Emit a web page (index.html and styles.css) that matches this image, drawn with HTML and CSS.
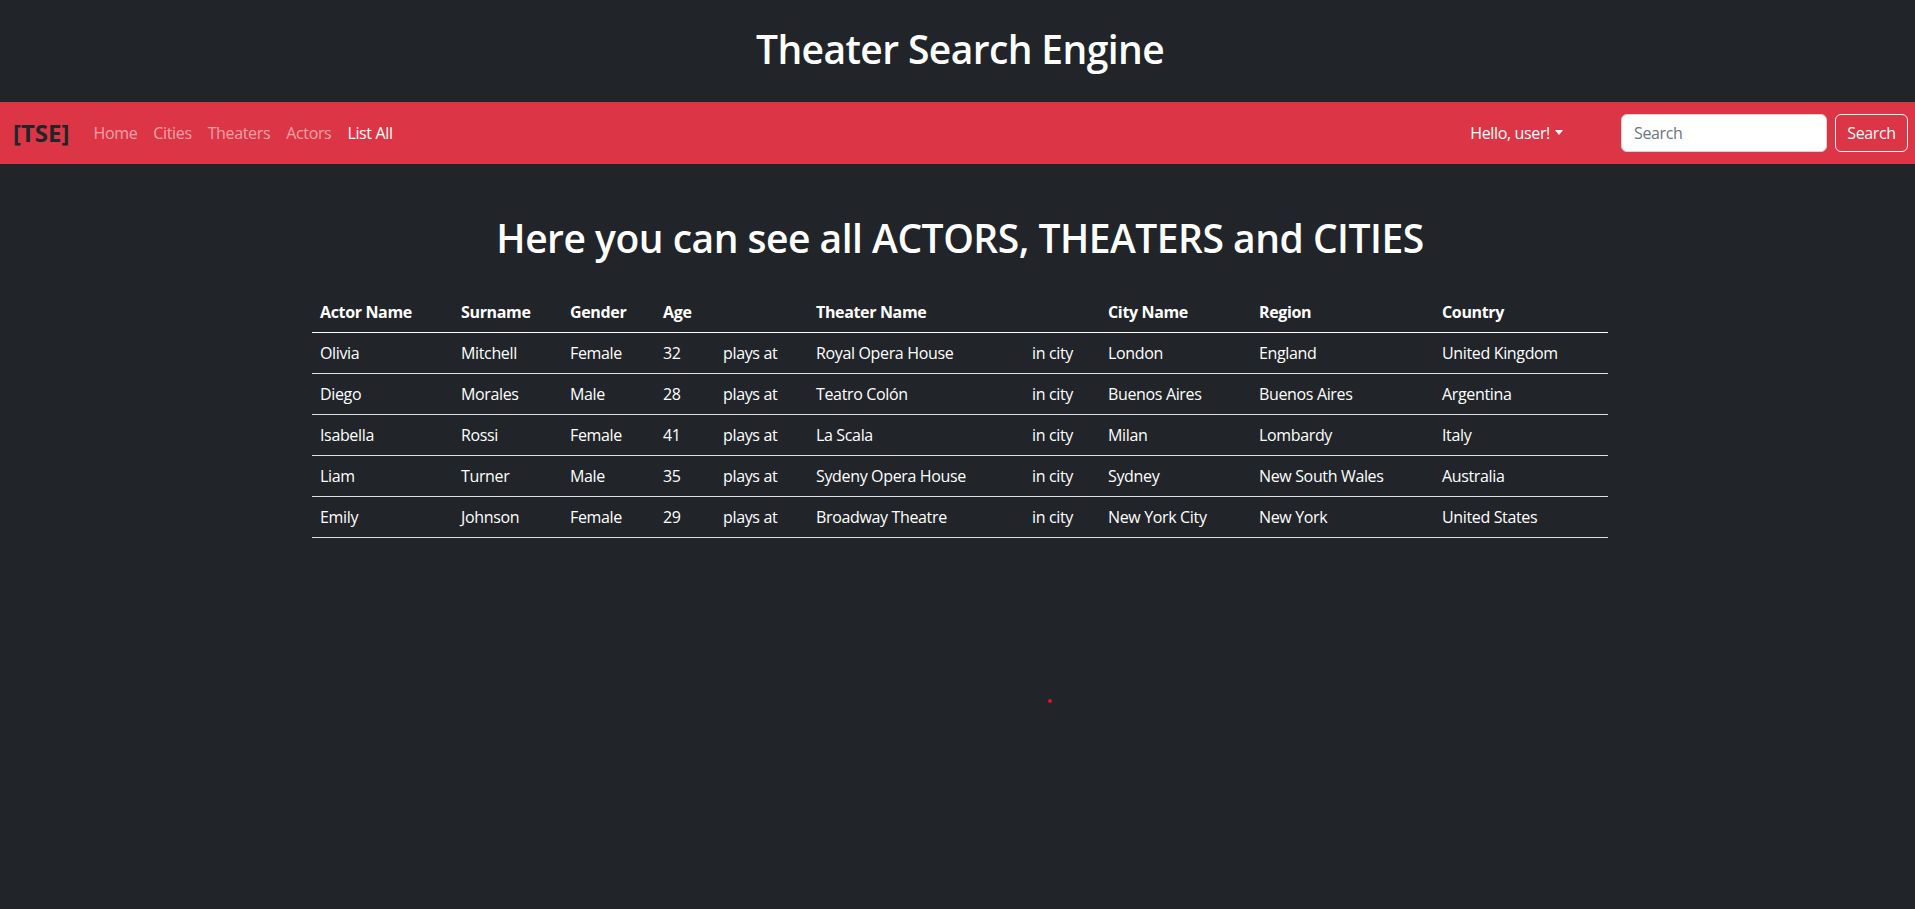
FILE: index.html
```html
<!DOCTYPE html>
<html lang="en">
<head>
<meta charset="utf-8">
<title>Theater Search Engine</title>
<link rel="stylesheet" href="styles.css">
</head>
<body>
<div class="page">
  <header class="site-header">
    <h1 class="site-title">Theater Search Engine</h1>
  </header>
  <nav class="navbar">
    <a class="brand" href="#">[TSE]</a>
    <ul class="nav-links">
      <li><a class="nav-link" href="#">Home</a></li>
      <li><a class="nav-link" href="#">Cities</a></li>
      <li><a class="nav-link" href="#">Theaters</a></li>
      <li><a class="nav-link" href="#">Actors</a></li>
      <li><a class="nav-link active" href="#">List All</a></li>
    </ul>
    <div class="nav-right">
      <a class="nav-link dropdown-toggle" href="#">Hello, user!</a>
      <form class="search-form">
        <input class="search-input" type="search" placeholder="Search">
        <button class="search-btn" type="button">Search</button>
      </form>
    </div>
  </nav>
  <main class="content">
    <h1 class="page-title">Here you can see all ACTORS, THEATERS and CITIES</h1>
    <table class="data-table">
      <colgroup>
        <col class="c-actor"><col class="c-surname"><col class="c-gender"><col class="c-age"><col class="c-plays">
        <col class="c-theater"><col class="c-incity"><col class="c-city"><col class="c-region"><col class="c-country">
      </colgroup>
      <thead>
        <tr><th>Actor Name</th><th>Surname</th><th>Gender</th><th>Age</th><th></th><th>Theater Name</th><th></th><th>City Name</th><th>Region</th><th>Country</th></tr>
      </thead>
      <tbody>
        <tr><td>Olivia</td><td>Mitchell</td><td>Female</td><td>32</td><td>plays at</td><td>Royal Opera House</td><td>in city</td><td>London</td><td>England</td><td>United Kingdom</td></tr>
        <tr><td>Diego</td><td>Morales</td><td>Male</td><td>28</td><td>plays at</td><td>Teatro Colón</td><td>in city</td><td>Buenos Aires</td><td>Buenos Aires</td><td>Argentina</td></tr>
        <tr><td>Isabella</td><td>Rossi</td><td>Female</td><td>41</td><td>plays at</td><td>La Scala</td><td>in city</td><td>Milan</td><td>Lombardy</td><td>Italy</td></tr>
        <tr><td>Liam</td><td>Turner</td><td>Male</td><td>35</td><td>plays at</td><td>Sydeny Opera House</td><td>in city</td><td>Sydney</td><td>New South Wales</td><td>Australia</td></tr>
        <tr><td>Emily</td><td>Johnson</td><td>Female</td><td>29</td><td>plays at</td><td>Broadway Theatre</td><td>in city</td><td>New York City</td><td>New York</td><td>United States</td></tr>
      </tbody>
    </table>
  </main>
  <span class="red-dot"></span>
</div>
</body>
</html>
```

FILE: styles.css
```css
html {
  overflow: hidden;
}

body {
  margin: 0;
  background: #212529;
  color: #ffffff;
  font-family: "Open Sans", "Noto Sans", sans-serif;
  font-size: 16px;
  line-height: 1.5;
  letter-spacing: -0.35px;
}

.page {
  position: relative;
  width: 1920px;
  min-height: 909px;
}

.site-header {
  padding: 25px 0 29px;
  text-align: center;
}

.site-title {
  margin: 0;
  font-size: 39px;
  font-weight: 600;
  line-height: 48px;
  letter-spacing: -0.6px;
}

.navbar {
  display: flex;
  align-items: center;
  height: 62px;
  box-sizing: border-box;
  padding: 12px 12px 12px 13px;
  background: #dc3545;
}

.brand {
  margin-right: 16px;
  color: #212529;
  font-size: 24px;
  font-weight: 700;
  line-height: 36px;
  letter-spacing: 0;
  text-decoration: none;
}

.nav-links {
  display: flex;
  margin: 0;
  padding: 0;
  list-style: none;
}

.nav-link {
  display: block;
  padding: 8px;
  color: rgba(255, 255, 255, 0.55);
  text-decoration: none;
}

.nav-link.active {
  color: #ffffff;
}

.nav-right {
  display: flex;
  align-items: center;
  margin-left: auto;
}

.dropdown-toggle {
  margin-right: 50px;
  color: #ffffff;
}

.dropdown-toggle::after {
  content: "";
  display: inline-block;
  margin-left: 5px;
  vertical-align: 4px;
  border-top: 5px solid;
  border-left: 4px solid transparent;
  border-right: 4px solid transparent;
}

.search-form {
  display: flex;
  gap: 8px;
}

.search-input {
  width: 206px;
  height: 38px;
  box-sizing: border-box;
  padding: 6px 12px;
  border: 1px solid #ced4da;
  border-radius: 6px;
  background: #ffffff;
  color: #212529;
  font-family: inherit;
  font-size: 16px;
  letter-spacing: -0.35px;
  outline: none;
}

.search-input::placeholder {
  color: #6c757d;
}

.search-btn {
  width: 73px;
  height: 38px;
  padding: 6px 0;
  border: 1px solid #f8f9fa;
  border-radius: 6px;
  background: transparent;
  color: #f8f9fa;
  font-family: inherit;
  font-size: 16px;
  letter-spacing: -0.35px;
}

.content {
  width: 1296px;
  margin: 0 auto;
  padding-top: 50px;
}

.page-title {
  margin: 0 0 30px;
  text-align: center;
  font-size: 39px;
  font-weight: 600;
  line-height: 48px;
  letter-spacing: -0.5px;
}

.data-table {
  width: 1296px;
  table-layout: fixed;
  border-collapse: collapse;
}

.data-table th,
.data-table td {
  padding: 8px;
  text-align: left;
  white-space: nowrap;
  border-bottom: 1px solid #dee2e6;
}

.data-table th {
  font-weight: 700;
  border-bottom-color: #ffffff;
}

.c-actor { width: 141px; }
.c-surname { width: 109px; }
.c-gender { width: 93px; }
.c-age { width: 60px; }
.c-plays { width: 93px; }
.c-theater { width: 216px; }
.c-incity { width: 76px; }
.c-city { width: 151px; }
.c-region { width: 183px; }
.c-country { width: 174px; }

.red-dot {
  position: absolute;
  left: 1048px;
  top: 699px;
  width: 4px;
  height: 4px;
  border-radius: 50%;
  background: #e3141b;
}
```
